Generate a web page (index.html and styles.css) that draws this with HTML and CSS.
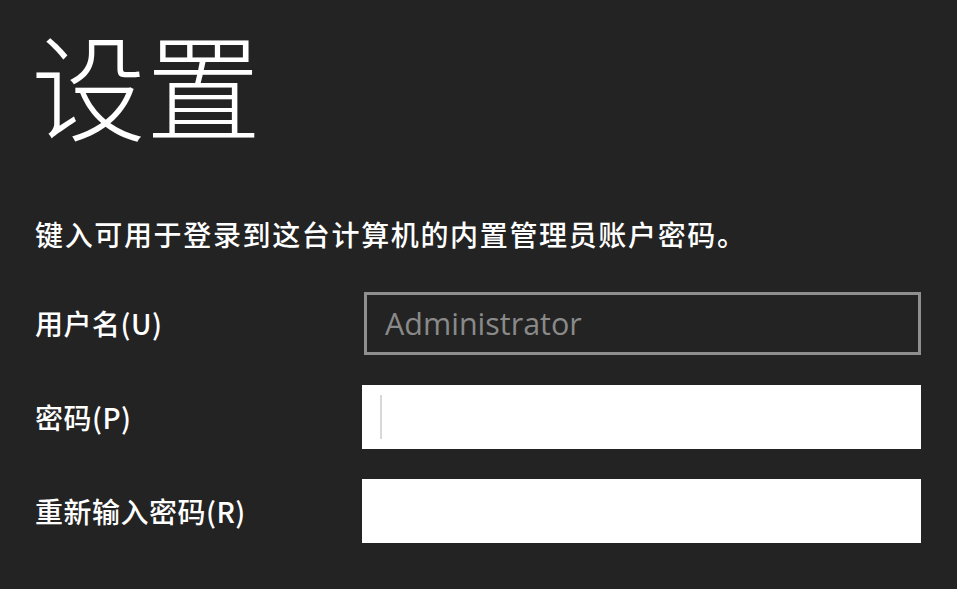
FILE: index.html
```html
<!DOCTYPE html>
<html lang="zh-CN">
<head>
  <meta charset="UTF-8">
  <title>设置</title>
  <link rel="stylesheet" href="styles.css">
</head>
<body>

  <div class="page">
    <h1 class="title">设置</h1>
    <p class="intro">键入可用于登录到这台计算机的内置管理员账户密码。</p>

    <div class="form">
      <label class="label">用户名(U)</label>
      <div class="field field-disabled">Administrator</div>

      <label class="label">密码(P)</label>
      <div class="field field-active"><span class="caret"></span></div>

      <label class="label">重新输入密码(R)</label>
      <div class="field field-active"></div>
    </div>
  </div>

</body>
</html>
```

FILE: styles.css
```css
html, body {
  margin: 0;
  padding: 0;
  height: 100%;
  background: #232323;
  color: #fff;
  font-family: "Noto Sans CJK SC", "Noto Sans", sans-serif;
}

.page {
  padding: 12px 36px 0 35px;
}

.title {
  margin: 0 0 0 -4px;
  font-size: 115px;
  font-weight: 300;
  line-height: 140px;
}

.intro {
  margin: 64px 0 0;
  font-size: 28px;
  font-weight: 500;
  line-height: 36px;
  letter-spacing: 1.65px;
}

.form {
  margin-top: 39px;
  display: grid;
  grid-template-columns: 327px 559px;
  grid-auto-rows: 64px;
  row-gap: 30px;
  align-items: center;
}

.label {
  font-size: 28px;
  font-weight: 500;
  letter-spacing: 0.5px;
}

.field {
  height: 64px;
  box-sizing: border-box;
  display: flex;
  align-items: center;
  padding-left: 18px;
}

.field-disabled {
  border: 3px solid #8f8f8f;
  color: #8a8a8a;
  font-family: "Open Sans", "Noto Sans", sans-serif;
  font-size: 30.5px;
  width: 557px;
  margin-left: 2px;
  height: 63px;
}

.field-active {
  background: #fff;
}

.caret {
  width: 2px;
  height: 44px;
  background: #d8d8d8;
}
```
